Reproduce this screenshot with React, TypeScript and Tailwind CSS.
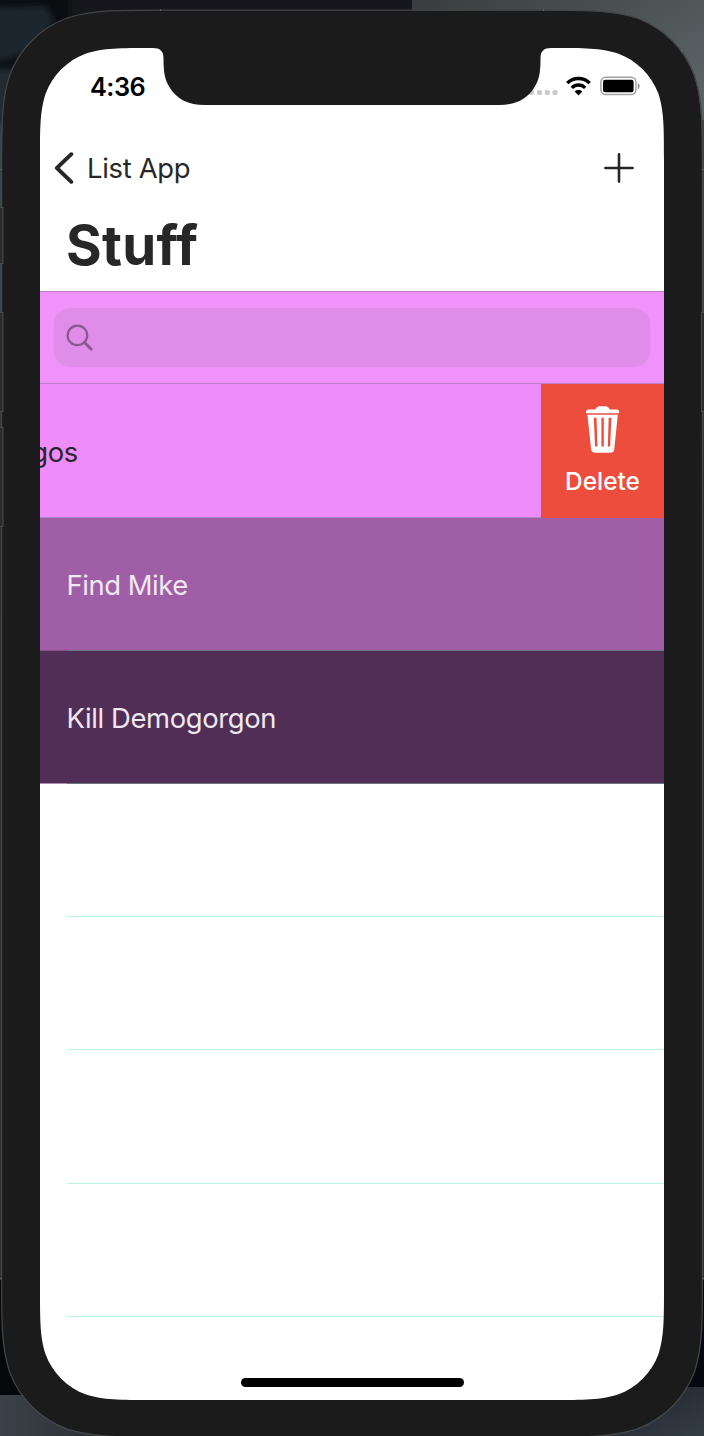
import React from "react";

const FONT = "font-[Inter,'Liberation_Sans',sans-serif]";

function Backdrop() {
  return (
    <svg className="absolute inset-0" width="704" height="1436" viewBox="0 0 704 1436" aria-hidden="true">
      <defs>
        <filter id="soft" x="-20%" y="-20%" width="140%" height="140%">
          <feGaussianBlur stdDeviation="3" />
        </filter>
        <linearGradient id="wall" x1="0" x2="1" y1="0" y2="0.6">
          <stop offset="0" stopColor="#393d3d" />
          <stop offset="1" stopColor="#596164" />
        </linearGradient>
        <linearGradient id="side" x1="0" x2="0" y1="0" y2="1">
          <stop offset="0" stopColor="#3b4449" />
          <stop offset="0.2" stopColor="#404a50" />
          <stop offset="0.3" stopColor="#2e2e2e" />
          <stop offset="1" stopColor="#303030" />
        </linearGradient>
        <linearGradient id="floorL" x1="0" x2="1" y1="0" y2="0">
          <stop offset="0" stopColor="#3b4148" />
          <stop offset="1" stopColor="#24282d" />
        </linearGradient>
        <linearGradient id="floorR" x1="0" x2="1" y1="0" y2="1">
          <stop offset="0" stopColor="#1d2228" />
          <stop offset="1" stopColor="#343c46" />
        </linearGradient>
      </defs>
      <rect width="704" height="1436" fill="#0b0e11" />
      <rect x="0" y="120" width="4" height="1160" fill="url(#side)" />
      <rect x="700" y="120" width="4" height="1160" fill="url(#side)" />
      <g filter="url(#soft)">
        <path d="M-10 8 L46 6 L54 20 L36 46 L8 60 L-10 60Z" fill="#1c252d" />
        <path d="M-10 68 L24 70 L14 110 L-10 140Z" fill="#202a33" />
        <rect x="70" y="-8" width="348" height="24" fill="#13171b" />
      </g>
      <path d="M412 0 H704 V120 H412Z" fill="url(#wall)" />
      <rect x="677" y="50" width="5" height="9" fill="#b5b8b8" />
      <rect x="0" y="1280" width="60" height="116" fill="#05080b" />
      <rect x="650" y="1280" width="54" height="108" fill="#05090f" />
      <rect x="0" y="1395" width="150" height="41" fill="url(#floorL)" />
      <rect x="590" y="1387" width="114" height="49" fill="url(#floorR)" />
    </svg>
  );
}

/* Continuous-curvature corner, as unit offsets from the corner along the two edges. */
const CORNER: [number, number][] = [
  [0, 1.52866],
  [0, 1.08849],
  [0, 0.86841],
  [0.07491, 0.63149],
  [0.16906, 0.37282],
  [0.37282, 0.16906],
  [0.63149, 0.07491],
  [0.86841, 0],
  [1.08849, 0],
  [1.52866, 0],
];

function corner(x: number, y: number, r: number, sx: number, sy: number, fromSide: boolean) {
  const order = fromSide ? CORNER : [...CORNER].reverse();
  const s = order.map(([u, v]) => `${(x + sx * u * r).toFixed(2)} ${(y + sy * v * r).toFixed(2)}`);
  return `${s[0]} C${s[1]} ${s[2]} ${s[3]} C${s[4]} ${s[5]} ${s[6]} C${s[7]} ${s[8]} ${s[9]}`;
}

function ring(l: number, t: number, r: number, b: number, k: number) {
  return `M${corner(l, t, k, 1, 1, true)} L${corner(r, t, k, -1, 1, false)} L${corner(r, b, k, -1, -1, true)} L${corner(l, b, k, 1, -1, false)}Z`;
}

/* Bezel ring with the screen cut out and the sensor notch hanging from its top edge. */
function DeviceFrame() {
  return (
    <svg className="pointer-events-none absolute inset-0" width="704" height="1436" viewBox="0 0 704 1436" aria-hidden="true">
      <path fillRule="evenodd" fill="#1b1b1b" d={`${ring(2, 10.5, 702, 1436.5, 104)} ${ring(40, 48, 664, 1400, 73)}`} />
      <path fill="none" stroke="#434648" strokeWidth="1.3" d={ring(1.6, 10.2, 702.4, 1437, 104)} />
      <path
        fill="#1b1b1b"
        d="M150 47 V48 H153 C160 48 163.5 51 163.5 58 C163.5 74 165 80 170 88 C177 99 188 105 205 105 H499 C516 105 527 99 534 88 C539 80 540.5 74 540.5 58 C540.5 51 544 48 551 48 H554 V47Z"
      />
      <g fill="#2c2c2c" stroke="#4a4a4a" strokeWidth="1">
        <rect x="-2" y="207.5" width="5" height="56" />
        <rect x="-2" y="312.5" width="5" height="99" />
        <rect x="-2" y="427.5" width="5" height="99" />
        <rect x="701.5" y="312.5" width="5" height="99" />
      </g>
      <g fill="#5a5d5f">
        <rect x="160" y="9" width="1" height="2" />
        <rect x="543" y="9" width="1" height="2" />
        <rect x="0" y="169" width="2" height="1" />
        <rect x="702" y="169" width="2" height="1" />
        <rect x="0" y="1278" width="2" height="1" />
        <rect x="702" y="1278" width="2" height="1" />
      </g>
    </svg>
  );
}

function StatusBar() {
  return (
    <div className="flex h-[76px] justify-between pl-[50px] pr-[23px] text-black">
      <span className="mt-[22.5px] text-[25.3px] font-semibold leading-8 tracking-[-0.5px]">4:36</span>
      <div className="flex h-[76px]">
        <svg className="mt-[42px] mr-[8px]" width="30" height="5" viewBox="0 0 30 5">
          <g fill="#cbcbcb">
            <rect x="1" width="5" height="5" rx="1.6" />
            <rect x="9" width="5" height="5" rx="1.6" />
            <rect x="16.8" width="5" height="5" rx="1.6" />
            <rect x="24.5" width="5" height="5" rx="1.6" />
          </g>
        </svg>
        <svg className="mt-[28px] mr-[9px]" width="25" height="20" viewBox="0 0 25 20">
          <g fill="none" stroke="#000" strokeWidth="3.4">
            <path d="M1.3 7.2 C7.3 .9 17.7 .9 23.7 7.2" />
            <path d="M5.8 11.9 C9.5 8.1 15.5 8.1 19.2 11.9" />
          </g>
          <path d="M12.5 19.4 L8.7 15.5 C10.8 13.6 14.2 13.6 16.3 15.5Z" />
        </svg>
        <svg className="mt-[28px]" width="41" height="20" viewBox="0 0 41 20">
          <rect x="0.9" y="1.2" width="35" height="17.4" rx="4.8" fill="#fff" stroke="#a2a2a2" strokeWidth="1.5" />
          <rect x="3" y="3.7" width="30.6" height="12.6" rx="2.2" />
          <path d="M37.8 7 C40.2 7.8 40.2 12.4 37.8 13.2Z" fill="#8c8c8c" />
        </svg>
      </div>
    </div>
  );
}

function NavigationBar() {
  return (
    <header className="text-[#272727]">
      <div className="flex h-[88px] items-center justify-between pl-[14px] pr-[30px]">
        <div className="flex items-center">
          <svg width="20" height="32" viewBox="0 0 20 32">
            <path d="M17.3 2.2 L2.9 16 L17.3 29.8" fill="none" stroke="currentColor" strokeWidth="3.9" strokeLinecap="round" strokeLinejoin="round" />
          </svg>
          <span className="ml-[13px] text-[27.4px] leading-8 tracking-[-0.3px]">List App</span>
        </div>
        <svg width="30" height="30" viewBox="0 0 30 30">
          <path d="M15 1.4 V28.6 M1.4 15 H28.6" stroke="currentColor" strokeWidth="2.6" strokeLinecap="round" />
        </svg>
      </div>
      <h1 className="h-[79px] pl-[26px] pt-[3px] text-[54.5px] font-bold leading-[60px] tracking-[0.3px]">Stuff</h1>
    </header>
  );
}

function SearchBar() {
  return (
    <div className="h-[93px] border-y border-[#c17bcb] bg-[#ef92fa] px-[14px] pt-[16px]">
      <div className="flex h-[59px] items-center rounded-[16px] bg-[#df8de8] pl-[12px]">
        <svg width="28" height="28" viewBox="0 0 28 28" fill="none" stroke="#875890" strokeLinecap="round">
          <circle cx="11.4" cy="11.4" r="9.8" strokeWidth="2.2" />
          <path d="M18.8 18.8 L25.2 25.2" strokeWidth="2.8" />
        </svg>
      </div>
    </div>
  );
}

function TrashIcon() {
  return (
    <svg width="34" height="47" viewBox="0 0 34 47" fill="#fff">
      <path d="M0 7.2 V5.6 Q0 3.4 2.6 3.4 H9.2 Q10.9 .2 13.2 .2 H19.8 Q22.2 .2 23.8 3.4 H30.6 Q33.1 3.4 33.1 5.6 V7.2Z" />
      <path
        fillRule="evenodd"
        d="M1.4 8.7 H31.8 L28.3 43 Q27.9 46.8 24.3 46.8 H9 Q5.5 46.8 5.1 43Z M7.8 11.8 L9.1 40.4 H11.4 L10.5 11.8Z M15.4 11.8 V40.4 H17.8 V11.8Z M22.7 11.8 L21.8 40.4 H24.1 L25.4 11.8Z"
      />
    </svg>
  );
}

const items = [
  { label: "Find Mike", row: "bg-[#a05ea6]", line: "bg-[#657383]", edge: "bg-[#8a4f90]", tracking: "tracking-[-0.45px]" },
  { label: "Kill Demogorgon", row: "bg-[#502e55]", line: "bg-[#6d7685]", edge: "bg-[#a88fab]", tracking: "tracking-[-0.37px]" },
];

const emptyRows = ["h-[133px]", "h-[133px]", "h-[134px]", "h-[133px]"];

export default function App() {
  return (
    <div className={`relative h-[1436px] w-[704px] overflow-hidden ${FONT}`}>
      <Backdrop />
      <div className="relative px-[40px] pt-[48px]">
        <main className="flex h-[1352px] flex-col overflow-hidden rounded-[60px] bg-white">
          <StatusBar />
          <NavigationBar />
          <SearchBar />
          <section>
            <div className="flex h-[134px]">
              <div className="flex w-[501px] items-center justify-start overflow-hidden border-b border-[#a886c4] bg-[#ef8cf9] text-[27.4px] tracking-[-0.3px] text-[#272727]">
                <span className="-ml-[174px] w-[212px] shrink-0 whitespace-nowrap pt-[4px] text-right">Buy Eggos</span>
              </div>
              <button className="flex flex-1 flex-col items-center bg-[#ed4d3d] pt-[22px] text-white">
                <TrashIcon />
                <span className="mt-[12px] text-[24.4px] font-medium leading-8">Delete</span>
              </button>
            </div>
            {items.map((item) => (
              <div key={item.label} className={`flex h-[133px] flex-col ${item.row}`}>
                <div className={`flex flex-1 items-center pl-[26.5px] pt-[4px] text-[27.4px] text-[#f0e8f1] ${item.tracking}`}>{item.label}</div>
                <div className="flex h-px">
                  <div className={`w-[27px] ${item.edge}`} />
                  <div className={`flex-1 ${item.line}`} />
                </div>
              </div>
            ))}
            {emptyRows.map((height, i) => (
              <div key={i} className={`ml-[27px] border-b border-[#b9f7df] ${height}`} />
            ))}
          </section>
          <div className="mx-auto mt-[61px] h-[9px] w-[223px] shrink-0 rounded-full bg-black" />
        </main>
      </div>
      <DeviceFrame />
    </div>
  );
}
